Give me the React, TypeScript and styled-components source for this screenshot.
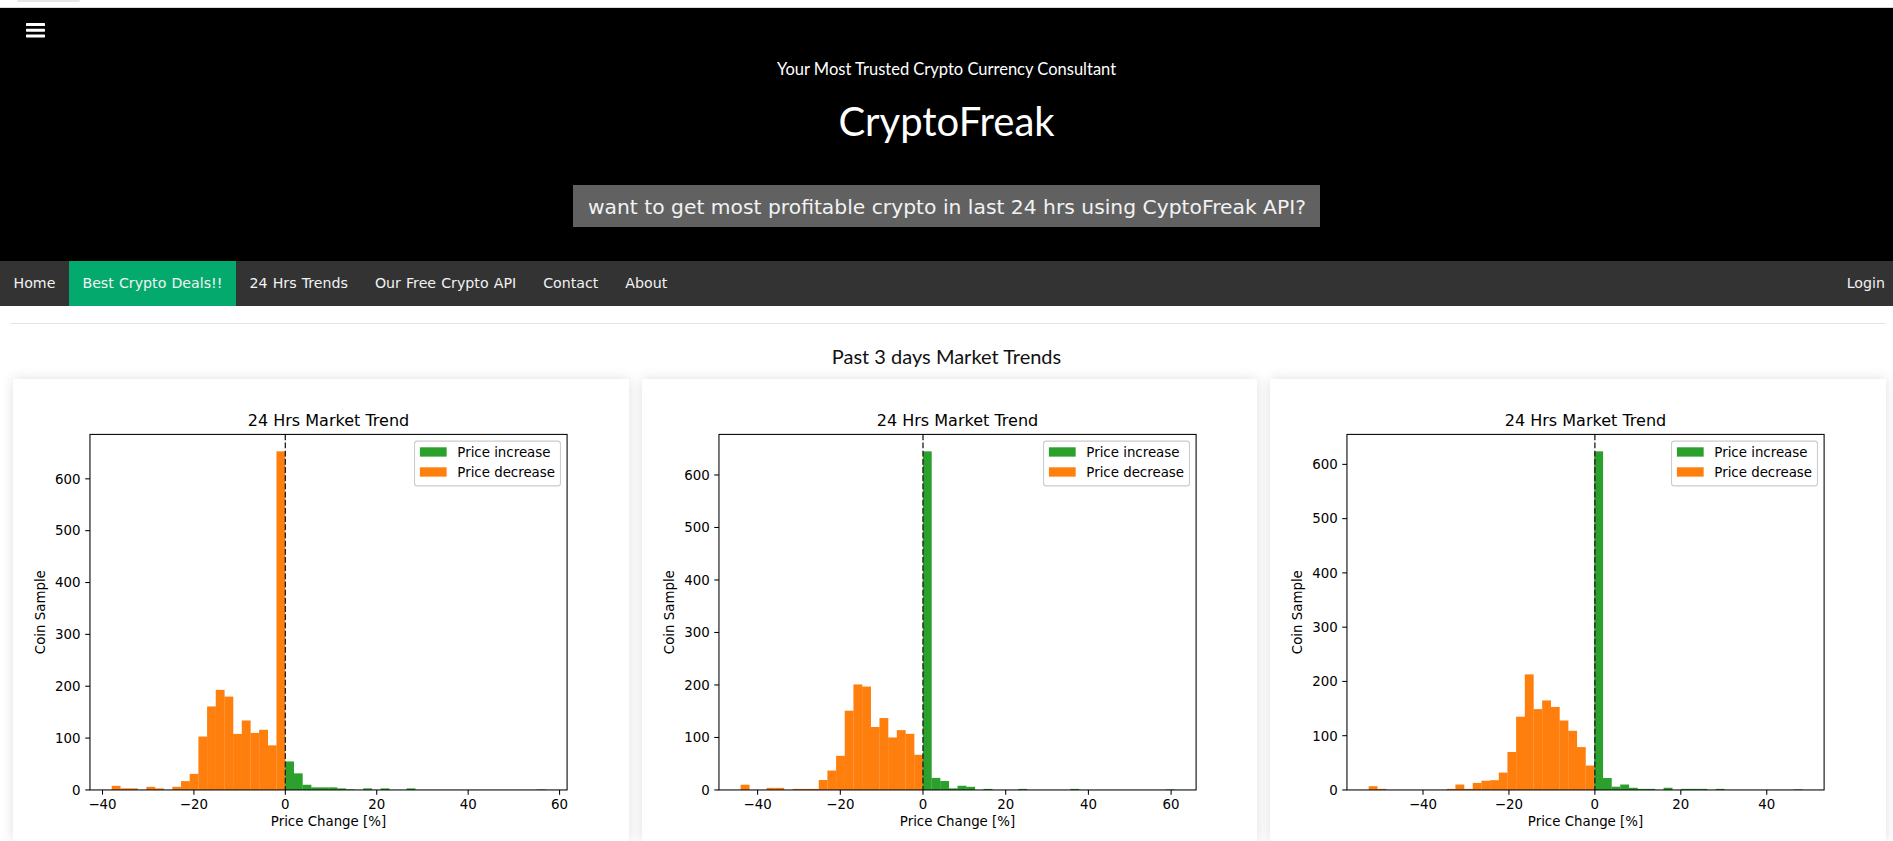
import * as React from "react"
import styled, { createGlobalStyle } from "styled-components"

const GlobalStyle = createGlobalStyle`
    body {
        margin: 0;
        background: #fff;
        font-family: Lato, "Open Sans", sans-serif;
    }
`

const TopStrip = styled.div`
    height: 7px;
    border-bottom: 1px solid #d9d9d9;
    background: #fff;
`

const Tab = styled.div`
    margin-left: 17px;
    width: 63px;
    height: 2px;
    background: #e6e6e6;
    border-radius: 0 0 6px 6px;
`

const Header = styled.header`
    background: #000;
    height: 253px;
    padding-top: 15px;
    box-sizing: border-box;
    display: flex;
    flex-direction: column;
    align-items: center;
    color: #fff;
`

const MenuButton = styled.div`
    align-self: flex-start;
    margin-left: 26px;
    width: 19px;
    height: 15px;
    line-height: 0;
`

const Tagline = styled.div`
    margin-top: 21px;
    font-size: 16.5px;
    line-height: 20px;
`

const Brand = styled.h1`
    margin: 18px 0 0;
    font-size: 40px;
    font-weight: 400;
    line-height: 48px;
`

const Pill = styled.div`
    margin-top: 40px;
    background: #616161;
    color: #f2f2f2;
    font-family: "DejaVu Sans", Verdana, sans-serif;
    font-size: 20.3px;
    line-height: 40px;
    padding: 2px 14px 0 15px;
`

const NavBar = styled.nav`
    display: flex;
    justify-content: space-between;
    background: #333;
    height: 45px;
`

const NavGroup = styled.div`
    display: flex;
`

const NavItem = styled.a<{ $active?: boolean; $edge?: boolean }>`
    display: block;
    padding: 0 ${(p) => (p.$edge ? "8px" : "13.5px")} 0 13.5px;
    line-height: 45px;
    font-family: "DejaVu Sans", Verdana, sans-serif;
    font-size: 14.2px;
    word-spacing: 0.6px;
    color: #f2f2f2;
    text-decoration: none;
    background: ${(p) => (p.$active ? "#04aa6d" : "transparent")};
`

const Divider = styled.hr`
    margin: 17px 7px 0 10px;
    border: 0;
    border-top: 1px solid #e5e5e5;
`

const SectionTitle = styled.h2`
    margin: 20px 0 0;
    text-align: center;
    font-size: 20px;
    font-weight: 400;
    line-height: 24px;
    color: #111;
`

const CardRow = styled.div`
    display: grid;
    grid-template-columns: repeat(3, 1fr);
    gap: 13px;
    padding: 0 7px 0 13px;
    margin-top: 11px;
`

const Card = styled.div`
    background: #fff;
    box-shadow: 0 0 12px rgba(0, 0, 0, 0.13);
`

const ChartSvg = styled.svg`
    display: block;
    width: 100%;
    height: auto;
    font-family: "DejaVu Sans", sans-serif;
`

interface ChartData {
    xmin: number
    xmax: number
    xticks: number[]
    counts: number[]
}

const pad = (n: number) => Array(n).fill(0)

// 50-bin histograms read off the three plots
const charts: ChartData[] = [
    {
        xmin: -38.0,
        xmax: 56.9,
        xticks: [-40, -20, 0, 20, 40, 60],
        counts: [
            8, 3, 3, 0, 6, 3, 0, 6, 17, 31, 103, 161, 193, 180, 108, 134, 110, 116, 86, 653,
            55, 32, 10, 5, 5, 5, 3, 1, 0, 3, 0, 3, 0, 0, 3, ...pad(14), 1,
        ],
    },
    {
        xmin: -44.1,
        xmax: 60.8,
        xticks: [-40, -20, 0, 20, 40, 60],
        counts: [
            10, 0, 0, 4, 4, 0, 2, 2, 2, 19, 37, 65, 151, 201, 197, 120, 137, 100, 114, 107, 67,
            645, 23, 17, 3, 8, 6, 0, 2, 0, 0, 0, 2, 0, 0, 0, 0, 0, 2, ...pad(10), 1,
        ],
    },
    {
        xmin: -52.65,
        xmax: 48.3,
        xticks: [-40, -20, 0, 20, 40],
        counts: [
            7, 2, 0, 0, 0, 0, 0, 0, 0, 2, 10, 2, 13, 17, 18, 32, 70, 135, 213, 149, 165, 153, 128, 109, 79, 45,
            624, 22, 6, 10, 4, 2, 2, 0, 4, 0, 2, 2, 2, 0, 2, ...pad(8), 1,
        ],
    },
]

// matplotlib default axes box inside a 640x480 figure
const AX = { l: 80, r: 576, t: 57.6, b: 427.2 }
const GREEN = "#2ca02c"
const ORANGE = "#ff7f0e"
const fmt = (v: number) => (v < 0 ? "\u2212" + Math.abs(v) : String(v))

const TrendChart = ({ data }: { data: ChartData }) => {
    const span = data.xmax - data.xmin
    const lo = data.xmin - span * 0.05
    const hi = data.xmax + span * 0.05
    const top = Math.max(...data.counts) * 1.05
    const sx = (v: number) => AX.l + ((v - lo) / (hi - lo)) * (AX.r - AX.l)
    const sy = (v: number) => AX.b - (v / top) * (AX.b - AX.t)
    const bw = span / data.counts.length
    const zero = sx(0)

    return (
        <ChartSvg viewBox="0 0 640 480">
            <text x={328} y={49} fontSize={16.67} textAnchor="middle" fill="#000">24 Hrs Market Trend</text>
            {data.counts.map((c, i) => {
                if (!c) return null
                const x0 = data.xmin + i * bw
                const x1 = x0 + bw
                return (
                    <rect
                        key={i}
                        x={sx(x0)}
                        y={sy(c)}
                        width={sx(x1) - sx(x0) + 0.2}
                        height={AX.b - sy(c)}
                        fill={x0 + bw / 2 < 0 ? ORANGE : GREEN}
                    />
                )
            })}
            <line x1={zero} x2={zero} y1={AX.t} y2={AX.b} stroke="#222" strokeWidth={1.4} strokeDasharray="6 2.5" />
            <rect x={AX.l} y={AX.t} width={AX.r - AX.l} height={AX.b - AX.t} fill="none" stroke="#000" strokeWidth={1.1} />
            {data.xticks.map((t) => (
                <g key={t}>
                    <line x1={sx(t)} x2={sx(t)} y1={AX.b} y2={AX.b + 4.9} stroke="#000" strokeWidth={1.1} />
                    <text x={sx(t)} y={447} fontSize={13.89} textAnchor="middle" fill="#000">{fmt(t)}</text>
                </g>
            ))}
            {[0, 100, 200, 300, 400, 500, 600].map((t) => (
                <g key={t}>
                    <line x1={AX.l - 4.9} x2={AX.l} y1={sy(t)} y2={sy(t)} stroke="#000" strokeWidth={1.1} />
                    <text x={70.3} y={sy(t) + 5} fontSize={13.89} textAnchor="end" fill="#000">{t}</text>
                </g>
            ))}
            <text x={328} y={464.5} fontSize={13.89} textAnchor="middle" fill="#000">Price Change [%]</text>
            <text x={33} y={242.4} fontSize={13.89} textAnchor="middle" fill="#000" transform="rotate(-90 33 242.4)">Coin Sample</text>
            <rect x={417.4} y={64.6} width={151.7} height={46.5} rx={2.8} fill="#fff" fillOpacity={0.8} stroke="#ccc" strokeWidth={1.1} />
            <rect x={423} y={71} width={27.8} height={9.7} fill={GREEN} />
            <rect x={423} y={91.8} width={27.8} height={9.7} fill={ORANGE} />
            <text x={461.9} y={80.7} fontSize={13.89} fill="#000">Price increase</text>
            <text x={461.9} y={101.6} fontSize={13.89} fill="#000">Price decrease</text>
        </ChartSvg>
    )
}

const App = () => {
    return (
        <>
            <GlobalStyle />
            <TopStrip>
                <Tab />
            </TopStrip>
            <Header>
                <MenuButton>
                    <svg width="19" height="15" viewBox="0 0 19 15">
                        <rect x="0" y="0" width="19" height="3" rx="0.6" fill="#fff" />
                        <rect x="0" y="5.7" width="19" height="3" rx="0.6" fill="#fff" />
                        <rect x="0" y="11.4" width="19" height="3" rx="0.6" fill="#fff" />
                    </svg>
                </MenuButton>
                <Tagline>Your Most Trusted Crypto Currency Consultant</Tagline>
                <Brand>CryptoFreak</Brand>
                <Pill>want to get most profitable crypto in last 24 hrs using CyptoFreak API?</Pill>
            </Header>
            <NavBar>
                <NavGroup>
                    <NavItem href="#">Home</NavItem>
                    <NavItem href="#" $active>Best Crypto Deals!!</NavItem>
                    <NavItem href="#">24 Hrs Trends</NavItem>
                    <NavItem href="#">Our Free Crypto API</NavItem>
                    <NavItem href="#">Contact</NavItem>
                    <NavItem href="#">About</NavItem>
                </NavGroup>
                <NavItem href="#" $edge>Login</NavItem>
            </NavBar>
            <Divider />
            <SectionTitle>Past 3 days Market Trends</SectionTitle>
            <CardRow>
                {charts.map((c, i) => (
                    <Card key={i}>
                        <TrendChart data={c} />
                    </Card>
                ))}
            </CardRow>
        </>
    )
}

export default App
